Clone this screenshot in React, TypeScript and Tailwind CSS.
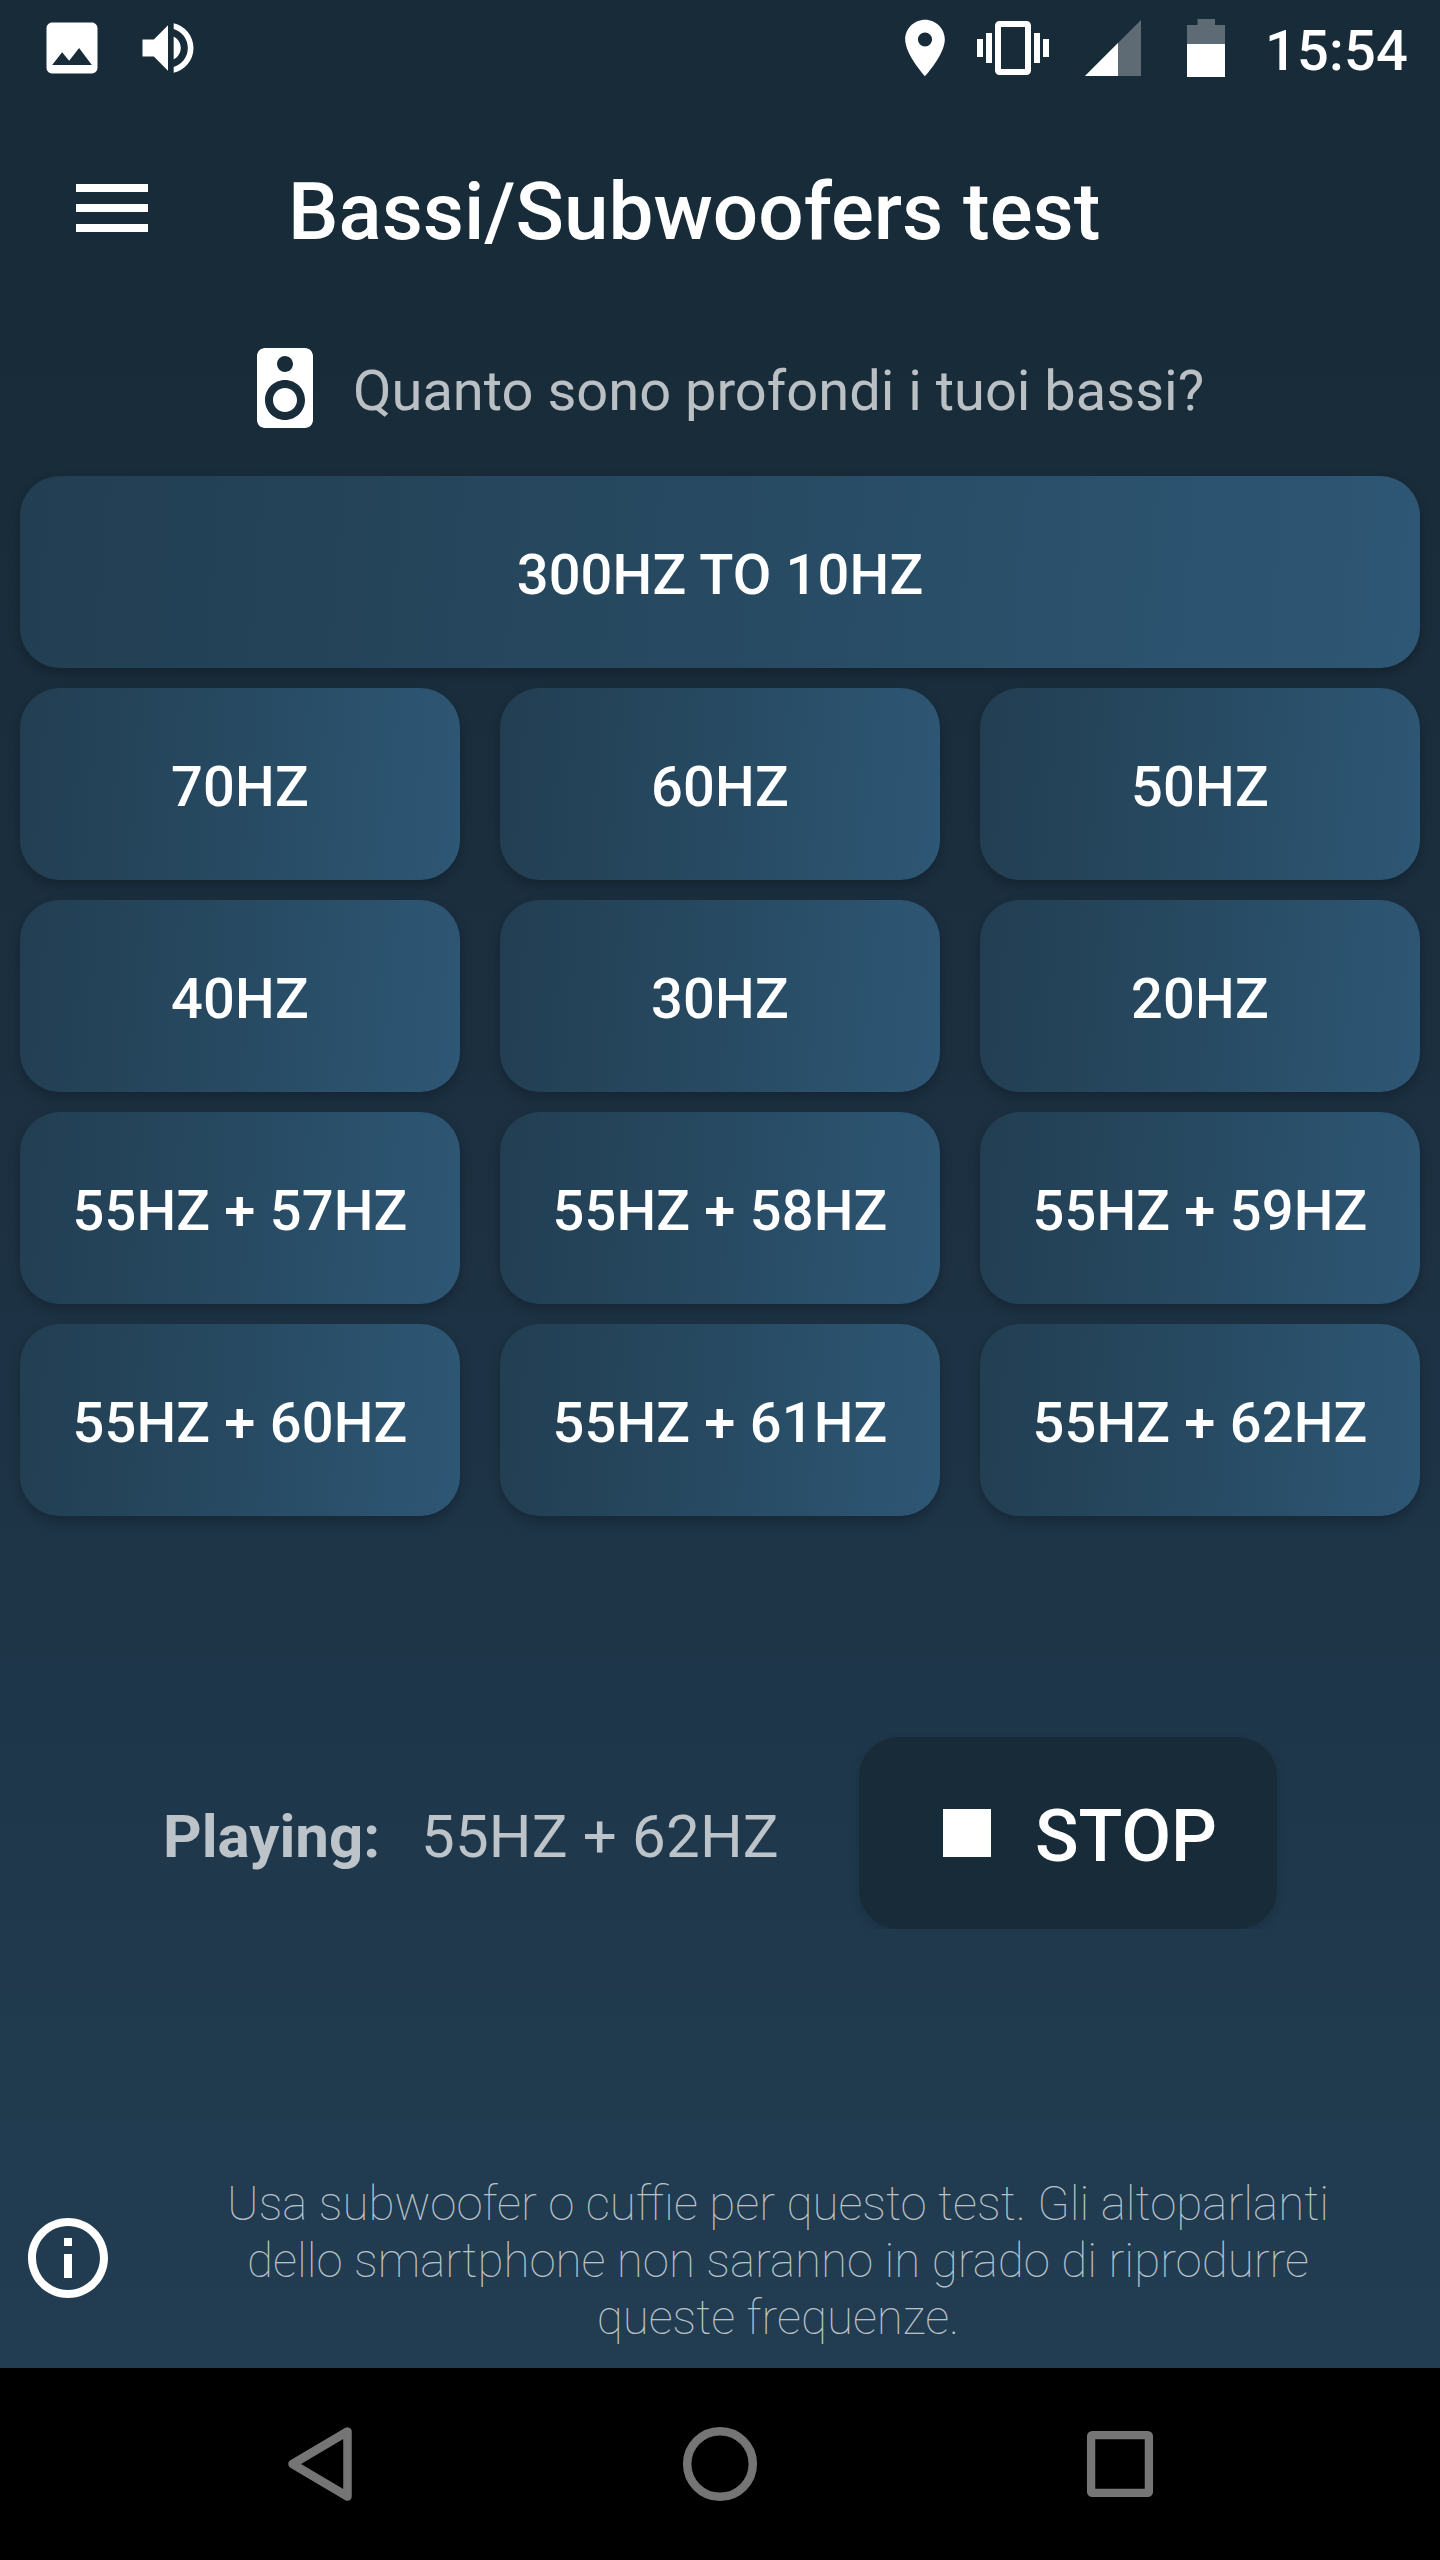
import type { ReactNode } from 'react';

const singleTones = ['70HZ', '60HZ', '50HZ', '40HZ', '30HZ', '20HZ'];
const mixedTones = ['55HZ + 57HZ', '55HZ + 58HZ', '55HZ + 59HZ', '55HZ + 60HZ', '55HZ + 61HZ', '55HZ + 62HZ'];

function Icon({ d, className }: { d: string; className: string }) {
  return (
    <svg viewBox="0 0 24 24" fill="currentColor" className={`shrink-0 ${className}`}>
      <path d={d} fillRule="evenodd" />
    </svg>
  );
}

function ToneButton({ children, wide }: { children: ReactNode; wide?: boolean }) {
  return (
    <button
      className={`flex h-48 items-center justify-center rounded-[40px] bg-linear-[95deg,#223e52,#274a62_50%,#2e5775] pt-1.5 text-[56px] leading-[66px] font-medium tracking-[0.16px] whitespace-nowrap shadow-[0_5px_12px_rgba(0,0,0,0.24)] ${wide ? 'col-span-3' : ''}`}
    >
      {children}
    </button>
  );
}

function StatusBar() {
  return (
    <div className="flex h-24 items-start pl-[38px]">
      <Icon className="mt-3.5 size-[68px]" d="M21 19V5c0-1.1-.9-2-2-2H5c-1.1 0-2 .9-2 2v14c0 1.1.9 2 2 2h14c1.1 0 2-.9 2-2zM8.5 13.5l2.5 3.01L14.5 12l4.5 6H5l3.5-4.5z" />
      <Icon className="mt-3.5 ml-7 size-[68px]" d="M3 9v6h4l5 5V4L7 9H3zm13.5 3c0-1.77-1.02-3.29-2.5-4.03v8.05c1.48-.73 2.5-2.25 2.5-4.02zM14 3.23v2.06c2.89.86 5 3.54 5 6.71s-2.11 5.85-5 6.71v2.06c4.01-.91 7-4.49 7-8.77s-2.99-7.86-7-8.77z" />
      <Icon className="mt-3.5 ml-auto size-[68px]" d="M12 2C8.13 2 5 5.13 5 9c0 5.25 7 13 7 13s7-7.75 7-13c0-3.87-3.13-7-7-7zm0 9.5a2.5 2.5 0 0 1 0-5 2.5 2.5 0 0 1 0 5z" />
      <Icon className="mt-3 ml-[18px] size-[72px]" d="M0 15h2V9H0v6zm3 2h2V7H3v10zm19-8v6h2V9h-2zm-3 8h2V7h-2v10zM16.5 3h-9C6.67 3 6 3.67 6 4.5v15c0 .83.67 1.5 1.5 1.5h9c.83 0 1.5-.67 1.5-1.5v-15c0-.83-.67-1.5-1.5-1.5zM16 19H8V5h8v14z" />
      {/* signal */}
      <svg viewBox="0 0 56 56" className="mt-5 ml-9 size-14 shrink-0">
        <path d="M0 56L56 0v56z" fill="#5e6b74" />
        <path d="M0 56L33 23v33z" fill="#fff" />
      </svg>
      {/* battery */}
      <svg viewBox="0 0 38 58" className="mt-[19px] ml-[46px] h-[58px] w-[38px] shrink-0">
        <path d="M10.5 0H28v6h10v19H0V6h10.5z" fill="#5e6b74" />
        <path d="M0 25h38v33H0z" fill="#fff" />
      </svg>
      <span className="mt-[18px] ml-[40px] w-[175px] text-[56px] leading-[66px] font-medium tracking-[0.2px]">15:54</span>
    </div>
  );
}

export default function App() {
  return (
    <div className="flex h-[2560px] w-[1440px] flex-col overflow-hidden bg-black font-['Roboto',sans-serif] text-white">
      <div className="flex h-[2368px] flex-col bg-linear-[180deg,#182b38_0%,#182b38_12%,#1c3041_50%,#1f384c_79%,#223d52_100%]">
        <StatusBar />

        {/* Toolbar */}
        <div className="flex h-56 items-center pl-16">
          <Icon className="size-24" d="M3 18h18v-2H3v2zm0-5h18v-2H3v2zm0-7v2h18V6H3z" />
          <h1 className="ml-32 pt-2 text-[80px] leading-[94px] font-medium whitespace-nowrap">Bassi/Subwoofers test</h1>
        </div>

        <div className="mt-5 flex h-24 items-center pl-[237px]">
          <Icon className="size-24" d="M17 2H7c-1.1 0-2 .9-2 2v16c0 1.1.9 2 2 2h10c1.1 0 2-.9 2-2V4c0-1.1-.9-2-2-2zm-5 2c1.1 0 2 .9 2 2s-.9 2-2 2a2 2 0 1 1 0-4zm0 16c-2.76 0-5-2.24-5-5s2.24-5 5-5 5 2.24 5 5-2.24 5-5 5zm0-8c-1.66 0-3 1.34-3 3s1.34 3 3 3 3-1.34 3-3-1.34-3-3-3z" />
          <p className="ml-5 pt-1.5 text-[56px] leading-[66px] whitespace-nowrap text-white/70">Quanto sono profondi i tuoi bassi?</p>
        </div>

        <div className="mx-5 mt-10 grid grid-cols-3 gap-x-10 gap-y-5">
          <ToneButton wide>300HZ TO 10HZ</ToneButton>
          {singleTones.map(t => <ToneButton key={t}>{t}</ToneButton>)}
          {mixedTones.map(t => <ToneButton key={t}>{t}</ToneButton>)}
        </div>

        {/* Now playing, the stop shadow is cut at the row's bottom edge */}
        <div className="mt-[201px] flex h-[212px] shrink-0 items-end overflow-hidden pl-[163px]">
          <div className="flex h-48 items-center pt-2 text-[60px] leading-[70px] whitespace-nowrap text-white/70">
            <span className="w-[258px] font-bold">Playing:</span>
            <span className="w-[438px] tracking-[0.16px]">55HZ + 62HZ</span>
          </div>
          <button className="flex h-48 w-[418px] items-center rounded-[40px] bg-[#182b38] pl-[84px] text-[72px] leading-[84px] font-medium shadow-[0_5px_12px_rgba(0,0,0,0.14)]">
            <span className="size-12 bg-white" />
            <span className="ml-11 pt-2">STOP</span>
          </button>
        </div>

        {/* Hint */}
        <div className="mt-auto flex pb-[21px] pl-5">
          <Icon className="mt-[34px] size-24" d="M11 7h2v2h-2V7zm0 4h2v6h-2v-6zm1-9C6.48 2 2 6.48 2 12s4.48 10 10 10 10-4.48 10-10S17.52 2 12 2zm0 18c-4.41 0-8-3.59-8-8s3.59-8 8-8 8 3.59 8 8-3.59 8-8 8z" />
          <p className="ml-5 w-[1284px] text-center text-[47.5px] leading-[57px] font-thin text-white/70">
            Usa subwoofer o cuffie per questo test. Gli altoparlanti<br />
            dello smartphone non saranno in grado di riprodurre<br />
            queste frequenze.
          </p>
        </div>
      </div>

      {/* Navigation bar */}
      <div className="flex h-48 items-center justify-center text-[#757575]">
        <svg viewBox="0 0 80 80" fill="none" stroke="currentColor" strokeWidth="8.5" strokeLinejoin="round" className="size-20">
          <path d="M67.5 7.5v65L12.5 40z" />
        </svg>
        <svg viewBox="0 0 80 80" fill="none" stroke="currentColor" strokeWidth="8.5" className="mx-80 size-20">
          <circle cx="40" cy="40" r="32.8" />
        </svg>
        <svg viewBox="0 0 80 80" fill="none" stroke="currentColor" strokeWidth="8.3" strokeLinejoin="round" className="size-20">
          <rect x="11.1" y="11.1" width="57.8" height="57.8" rx="1" />
        </svg>
      </div>
    </div>
  );
}
